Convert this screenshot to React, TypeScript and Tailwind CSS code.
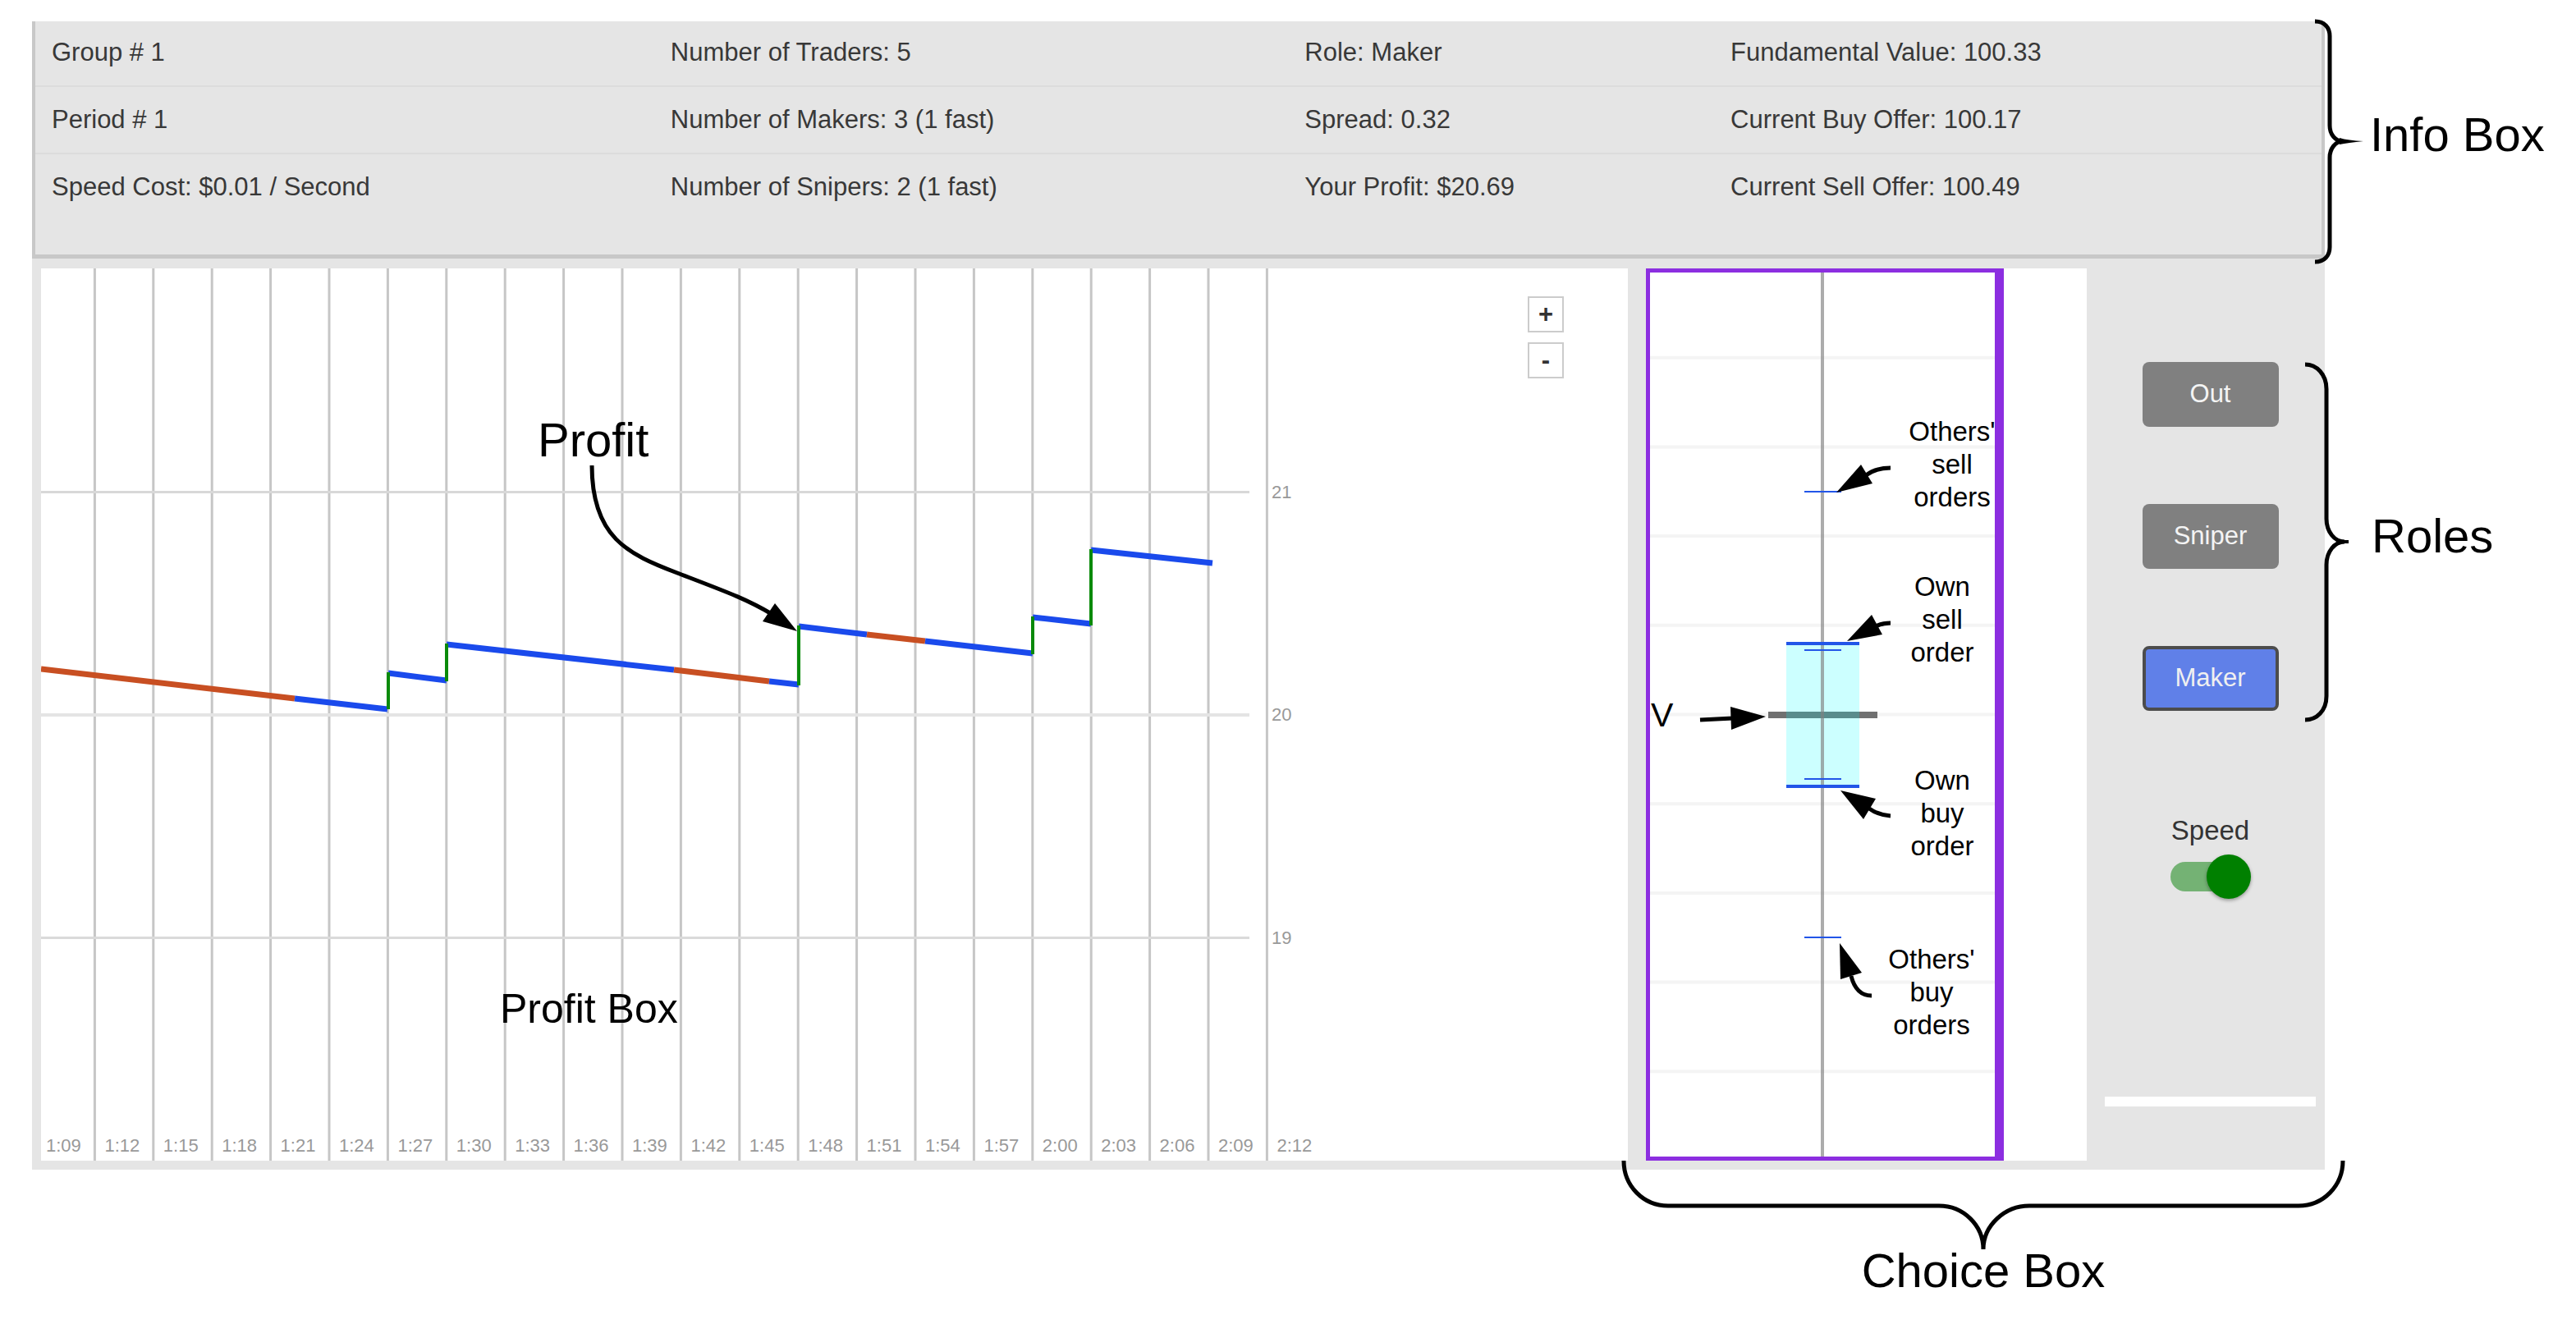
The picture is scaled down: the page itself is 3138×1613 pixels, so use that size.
import { useState } from "react";

const INFO_ROWS = [
  ["Group # 1", "Number of Traders: 5", "Role: Maker", "Fundamental Value: 100.33"],
  ["Period # 1", "Number of Makers: 3 (1 fast)", "Spread: 0.32", "Current Buy Offer: 100.17"],
  ["Speed Cost: $0.01 / Second", "Number of Snipers: 2 (1 fast)", "Your Profit: $20.69", "Current Sell Offer: 100.49"],
];

const ROW_STYLES = [
  "h-[79px] border-b-2 border-[#dcdcdc] align-top [&>td]:pt-[20px]",
  "h-[82px] border-b-2 border-[#dcdcdc] align-top [&>td]:pt-[22px]",
  "h-[125px] align-top [&>td]:pt-[22px]",
];

const TIMES = [
  "1:09", "1:12", "1:15", "1:18", "1:21", "1:24", "1:27", "1:30", "1:33", "1:36", "1:39",
  "1:42", "1:45", "1:48", "1:51", "1:54", "1:57", "2:00", "2:03", "2:06", "2:09", "2:12",
];

const BLUE = "#1a4aec";
const ORANGE = "#c84f22";
const GREEN = "#0a8a0a";

// Profit segments: x1, y1, x2, y2, colour
const SEGMENTS: [number, number, number, number, string][] = [
  [0, 488, 309, 524, ORANGE],
  [309, 524, 422, 537, BLUE],
  [423, 493, 494, 502, BLUE],
  [494, 458, 771, 489, BLUE],
  [771, 489, 887, 503, ORANGE],
  [887, 503, 923, 507, BLUE],
  [923, 436, 1006, 446, BLUE],
  [1006, 446, 1077, 454, ORANGE],
  [1077, 454, 1208, 469, BLUE],
  [1208, 425, 1279, 433, BLUE],
  [1279, 343, 1427, 359, BLUE],
];

// Profit jumps: x, y1, y2
const JUMPS = [
  [423, 537, 492],
  [494, 503, 457],
  [923, 508, 435],
  [1208, 470, 424],
  [1279, 435, 342],
];

function InfoTable() {
  return (
    <table className="w-full table-fixed border-collapse border-x-4 border-b-[5px] border-[#c8c8c8]">
      <colgroup>
        <col className="w-[27.1%]" />
        <col className="w-[27.7%]" />
        <col className="w-[18.6%]" />
        <col />
      </colgroup>
      <tbody>
        {INFO_ROWS.map((row, i) => (
          <tr key={row[0]} className={ROW_STYLES[i]}>
            {row.map((cell) => (
              <td key={cell} className="pl-5 text-[31px] leading-[36px] text-[#383838]">
                {cell}
              </td>
            ))}
          </tr>
        ))}
      </tbody>
    </table>
  );
}

function ProfitChart() {
  return (
    <section aria-label="Profit" className="relative flex-[1933] bg-white">
      <svg viewBox="0 0 1933 1087" className="block h-auto w-full">
        {TIMES.slice(0, 21).map((t, i) => (
          <line key={t} x1={65.4 + i * 71.4} x2={65.4 + i * 71.4} y1="0" y2="1087" stroke="#c6c6c6" strokeWidth="3" />
        ))}
        <line x1="0" x2="1472" y1="272.5" y2="272.5" stroke="#d8d8d8" strokeWidth="3" />
        <line x1="0" x2="1472" y1="544" y2="544" stroke="#e4e4e4" strokeWidth="4" />
        <line x1="0" x2="1472" y1="815.5" y2="815.5" stroke="#dadada" strokeWidth="3" />
        {SEGMENTS.map(([x1, y1, x2, y2, c]) => (
          <line key={x1} x1={x1} y1={y1} x2={x2} y2={y2} stroke={c} strokeWidth="7" />
        ))}
        {JUMPS.map(([x, y1, y2]) => (
          <line key={x} x1={x} x2={x} y1={y1} y2={y2} stroke={GREEN} strokeWidth="4" />
        ))}
        <g fill="#999999" fontSize="22">
          {TIMES.map((t, i) => (
            <text key={t} x={6 + i * 71.4} y="1076">{t}</text>
          ))}
          <text x="1499" y="280">21</text>
          <text x="1499" y="551">20</text>
          <text x="1499" y="823">19</text>
        </g>
        <path d="M671 240 C671 328 715 348 775 371 S860 403 890 421" fill="none" stroke="#000" strokeWidth="5" />
        <path d="M921 442 L894 408 L879 430 Z" />
        <text x="605" y="229" fontSize="58">Profit</text>
        <text x="559" y="919" fontSize="50">Profit Box</text>
      </svg>
      <div className="absolute right-[78px] top-[34px] flex flex-col gap-3 text-[31px] font-bold leading-[36px] text-[#333]">
        <button type="button" aria-label="Zoom in" className="flex size-11 items-center justify-center border-2 border-[#cccccc] bg-white">+</button>
        <button type="button" aria-label="Zoom out" className="flex size-11 items-center justify-center border-2 border-[#cccccc] bg-white">-</button>
      </div>
    </section>
  );
}

function Note({ x, y, lines }: { x: number; y: number; lines: string[] }) {
  return (
    <text fontSize="33" textAnchor="middle">
      {lines.map((l, i) => (
        <tspan key={l} x={x} y={y + i * 40}>{l}</tspan>
      ))}
    </text>
  );
}

function SpreadChart() {
  const grid = [1, 2, 3, 4, 5, 6, 7, 8, 9];
  return (
    <section aria-label="Spread" className="ml-[22px] flex-[537] bg-white">
      <svg viewBox="0 0 537 1087" className="block h-auto w-full">
        {grid.map((n) => (
          <line key={n} x1="5" x2="425" y1={n * 108.7} y2={n * 108.7} stroke="#f4f4f4" strokeWidth="4" />
        ))}
        <rect x="171" y="457" width="89" height="175" fill="#ccffff" />
        <rect x="149" y="540" width="133" height="8" fill="#707070" />
        <rect x="171" y="540" width="89" height="8" fill="#5a8c8c" />
        <rect x="213" y="0" width="4" height="1087" fill="#808080" fillOpacity="0.65" />
        <g fill="#2255e8">
          <rect x="193" y="271" width="45" height="2" />
          <rect x="171" y="455" width="89" height="4" />
          <rect x="193" y="464" width="45" height="2" />
          <rect x="193" y="621" width="45" height="2" />
          <rect x="171" y="629" width="89" height="4" />
          <rect x="193" y="814" width="45" height="2" />
        </g>
        <g fill="#8c2ee0">
          <rect x="0" y="0" width="5" height="1087" />
          <rect x="0" y="0" width="436" height="5" />
          <rect x="0" y="1082" width="436" height="5" />
          <rect x="425" y="0" width="11" height="1087" />
        </g>
        <g fill="none" stroke="#000" strokeWidth="5">
          <path d="M268 252 Q280 243 298 243" />
          <path d="M280 436 Q288 432 298 432" />
          <path d="M66 550 L106 548" />
          <path d="M272 658 Q283 666 298 667" />
          <path d="M250 862 Q256 886 275 886" />
        </g>
        <g fill="#000">
          <path d="M232 273 L262 239 L276 262 Z" />
          <path d="M245 454 L275 422 L288 446 Z" />
          <path d="M146 546 L103 534 L104 562 Z" />
          <path d="M237 636 L280 646 L265 671 Z" />
          <path d="M236 822 L263 858 L237 866 Z" />
        </g>
        <Note x={373} y={210} lines={["Others'", "sell", "orders"]} />
        <Note x={361} y={399} lines={["Own", "sell", "order"]} />
        <Note x={361} y={635} lines={["Own", "buy", "order"]} />
        <Note x={348} y={853} lines={["Others'", "buy", "orders"]} />
        <text x="6" y="558" fontSize="41">V</text>
      </svg>
    </section>
  );
}

function Controls() {
  const [role, setRole] = useState("Maker");
  const [fast, setFast] = useState(true);
  return (
    <section aria-label="Choices" className="flex w-[290px] flex-col items-center pl-[22px] pr-[11px] pt-[114px]">
      <div className="flex flex-col gap-[94px]">
        {["Out", "Sniper", "Maker"].map((r) => (
          <button
            key={r}
            type="button"
            aria-pressed={role === r}
            onClick={() => setRole(r)}
            className={
              role === r
                ? "h-[79px] w-[166px] rounded-lg border-4 border-[#4c4c4c] bg-[#6080e8] text-[31px] leading-[36px] text-[#f0f0f0]"
                : "h-[79px] w-[166px] rounded-lg bg-[#808080] text-[31px] leading-[36px] text-[#f4f4f4]"
            }
          >
            {r}
          </button>
        ))}
      </div>
      <label htmlFor="speed" className="mt-[128px] text-[33px] leading-[36px] text-[#333]">
        Speed
      </label>
      <input
        id="speed"
        type="checkbox"
        role="switch"
        checked={fast}
        onChange={(e) => setFast(e.target.checked)}
        className="relative mt-5 h-9 w-[98px] appearance-none rounded-full bg-linear-to-r from-[#74b274] from-80% to-transparent to-80% before:absolute before:-top-[9px] before:left-0 before:size-[54px] before:rounded-full before:bg-[#f4f4f4] before:shadow-[0_2px_4px_rgba(0,0,0,0.35)] checked:before:left-[44px] checked:before:bg-[#008000]"
      />
      <div className="mt-[250px] h-3 w-full bg-white" />
    </section>
  );
}

export default function App() {
  return (
    <main className="min-h-screen bg-white pl-[39px] pt-[26px] font-['Liberation_Sans',Arial,sans-serif] text-black">
      <div className="flex">
        <div className="min-w-0 flex-1 bg-[#e5e5e5]">
          <InfoTable />
          <div className="flex pb-[11px] pl-[11px] pt-3">
            <ProfitChart />
            <SpreadChart />
            <Controls />
          </div>
        </div>
        <aside className="relative w-[306px] pt-[106px] text-[58px] leading-[64px]">
          <svg viewBox="0 0 72 310" className="absolute -left-[14px] -top-[4px] h-[310px] w-[72px]">
            <path
              d="M2 4 C14 4 20 12 20 22 V131 C20 142 27 150 36 150 C27 150 20 159 20 170 V279 C20 289 14 297 2 297"
              fill="none"
              stroke="#000"
              strokeWidth="5"
            />
            <path d="M32 146 Q42 149 61 150 Q42 152 32 154 Z" />
          </svg>
          <h2 className="pl-[55px]">Info Box</h2>
          <svg viewBox="0 0 60 440" className="absolute -left-[26px] top-[414px] h-[440px] w-[60px]">
            <path
              d="M2 4 C16 4 28 16 28 34 V192 C28 208 38 220 50 220 C38 220 28 232 28 248 V408 C28 426 16 437 2 437"
              fill="none"
              stroke="#000"
              strokeWidth="5"
            />
            <path d="M42 218 L55 218 V222 H42 Z" />
          </svg>
          <h2 className="pl-[57px] pt-[425px]">Roles</h2>
        </aside>
      </div>
      <div className="flex justify-end pr-[281px]">
        <div className="-mt-[11px] flex w-[882px] flex-col items-center">
          <svg viewBox="0 0 882 112" className="block h-[112px] w-full">
            <path
              d="M3 0 C3 31 27 55 57 55 H387 C417 55 441 79 441 108 C441 79 467 55 497 55 H825 C855 55 879 31 879 0"
              fill="none"
              stroke="#000"
              strokeWidth="5"
              strokeLinejoin="bevel"
            />
          </svg>
          <h2 className="-mt-[10px] text-[58px] leading-[64px]">Choice Box</h2>
        </div>
      </div>
    </main>
  );
}
